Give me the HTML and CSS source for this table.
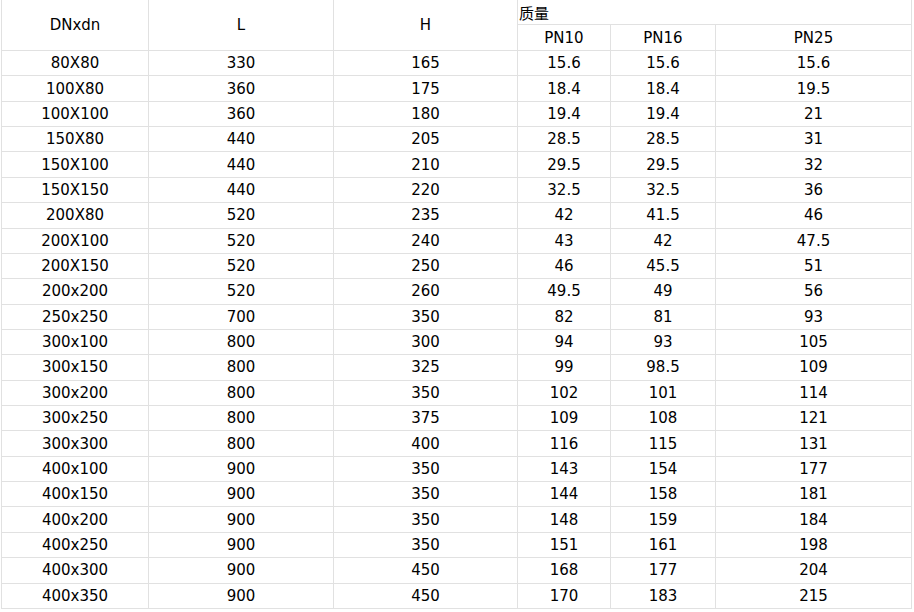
FILE: index.html
```html
<!DOCTYPE html>
<html>
<head>
<meta charset="utf-8">
<link rel="stylesheet" href="styles.css">
</head>
<body>
<table class="spec">
<colgroup>
<col class="c1"><col class="c2"><col class="c3"><col class="c4"><col class="c5"><col class="c6">
</colgroup>
<thead>
<tr class="h1">
<th rowspan="2">DNxdn</th>
<th rowspan="2">L</th>
<th rowspan="2">H</th>
<th colspan="3" class="mass">质量</th>
</tr>
<tr class="h2">
<th>PN10</th><th>PN16</th><th>PN25</th>
</tr>
</thead>
<tbody>
<tr><td>80X80</td><td>330</td><td>165</td><td>15.6</td><td>15.6</td><td>15.6</td></tr>
<tr><td>100X80</td><td>360</td><td>175</td><td>18.4</td><td>18.4</td><td>19.5</td></tr>
<tr><td>100X100</td><td>360</td><td>180</td><td>19.4</td><td>19.4</td><td>21</td></tr>
<tr><td>150X80</td><td>440</td><td>205</td><td>28.5</td><td>28.5</td><td>31</td></tr>
<tr><td>150X100</td><td>440</td><td>210</td><td>29.5</td><td>29.5</td><td>32</td></tr>
<tr><td>150X150</td><td>440</td><td>220</td><td>32.5</td><td>32.5</td><td>36</td></tr>
<tr><td>200X80</td><td>520</td><td>235</td><td>42</td><td>41.5</td><td>46</td></tr>
<tr><td>200X100</td><td>520</td><td>240</td><td>43</td><td>42</td><td>47.5</td></tr>
<tr><td>200X150</td><td>520</td><td>250</td><td>46</td><td>45.5</td><td>51</td></tr>
<tr><td>200x200</td><td>520</td><td>260</td><td>49.5</td><td>49</td><td>56</td></tr>
<tr><td>250x250</td><td>700</td><td>350</td><td>82</td><td>81</td><td>93</td></tr>
<tr><td>300x100</td><td>800</td><td>300</td><td>94</td><td>93</td><td>105</td></tr>
<tr><td>300x150</td><td>800</td><td>325</td><td>99</td><td>98.5</td><td>109</td></tr>
<tr><td>300x200</td><td>800</td><td>350</td><td>102</td><td>101</td><td>114</td></tr>
<tr><td>300x250</td><td>800</td><td>375</td><td>109</td><td>108</td><td>121</td></tr>
<tr><td>300x300</td><td>800</td><td>400</td><td>116</td><td>115</td><td>131</td></tr>
<tr><td>400x100</td><td>900</td><td>350</td><td>143</td><td>154</td><td>177</td></tr>
<tr><td>400x150</td><td>900</td><td>350</td><td>144</td><td>158</td><td>181</td></tr>
<tr><td>400x200</td><td>900</td><td>350</td><td>148</td><td>159</td><td>184</td></tr>
<tr><td>400x250</td><td>900</td><td>350</td><td>151</td><td>161</td><td>198</td></tr>
<tr><td>400x300</td><td>900</td><td>450</td><td>168</td><td>177</td><td>204</td></tr>
<tr><td>400x350</td><td>900</td><td>450</td><td>170</td><td>183</td><td>215</td></tr>
</tbody>
</table>
</body>
</html>
```
FILE: styles.css
```css
html, body {
  margin: 0;
  padding: 0;
  background: #ffffff;
}
body {
  padding-left: 1px;
}
.spec {
  border-collapse: collapse;
  table-layout: fixed;
  width: 911px;
  font-family: "DejaVu Sans", Verdana, "Noto Sans CJK SC", sans-serif;
  font-size: 15px;
  color: #000;
}
.c1 { width: 147px; }
.c2 { width: 185px; }
.c3 { width: 184px; }
.c4 { width: 93px; }
.c5 { width: 105px; }
.c6 { width: 196px; }
.spec th, .spec td {
  border: 1px solid #e1e1e1;
  padding: 0 2px;
  text-align: center;
  vertical-align: middle;
  font-weight: normal;
  overflow: hidden;
  white-space: nowrap;
}
.spec .h1 th {
  border-top: none;
  height: 24px;
}
.spec .h2 th {
  height: 25px;
}
.spec .mass {
  text-align: left;
  font-family: "Noto Sans CJK SC", sans-serif;
  font-size: 15px;
  padding-left: 1px;
}
.spec td {
  height: 24.36px;
}
```
